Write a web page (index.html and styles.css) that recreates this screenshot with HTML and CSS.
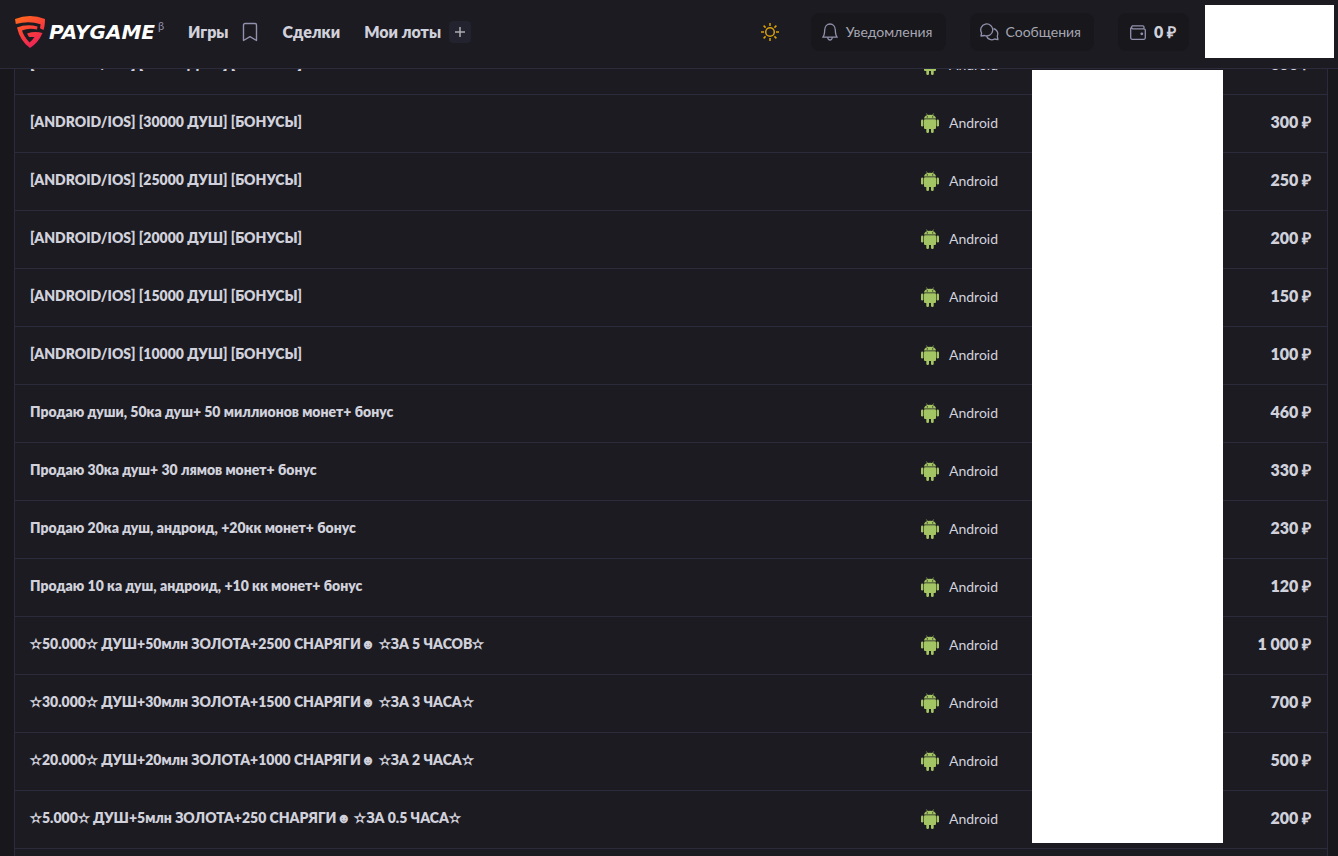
FILE: index.html
```html
<!DOCTYPE html>
<html lang="ru">
<head>
<meta charset="utf-8">
<title>PAYGAME</title>
<link rel="stylesheet" href="styles.css">
<script src="lots.js" defer></script>
</head>
<body>
<svg class="defs" aria-hidden="true">
  <symbol id="android" viewBox="0 0 18 20">
    <g fill="#a4c563">
      <path d="M3 5.600C3.200 3.200 5.300 1.700 9 1.700s5.800 1.500 6 3.900z"/>
      <path d="M5.400 .5l1.200 1.800M12.600 .5l-1.200 1.800" stroke="#a4c563" stroke-width=".7"/>
      <rect x="3" y="6.300" width="12" height="9.700" rx="1"/>
      <rect x="0" y="6.500" width="2.400" height="7" rx="1.200"/>
      <rect x="15.600" y="6.500" width="2.400" height="7" rx="1.200"/>
      <rect x="5.300" y="14" width="2.700" height="6" rx="1.200"/>
      <rect x="10" y="14" width="2.700" height="6" rx="1.200"/>
    </g>
    <circle cx="6.300" cy="3.900" r=".6" fill="#1b1b21"/>
    <circle cx="11.700" cy="3.900" r=".6" fill="#1b1b21"/>
  </symbol>
</svg>
<header class="header">
  <a class="logo" href="#">
    <svg width="30" height="32" viewBox="0 0 30 32" aria-hidden="true">
      <defs><linearGradient id="shield" gradientUnits="userSpaceOnUse" x1="4" y1="0" x2="20" y2="30"><stop offset="0" stop-color="#ff6a1c"/><stop offset=".5" stop-color="#fb4038"/><stop offset="1" stop-color="#ed2357"/></linearGradient></defs>
      <path fill="url(#shield)" d="M0 3Q15-3 30 3C30 7.500 29.500 11 28.500 14L25 12.300 25.600 8.200Q14 4.500 .8 8z"/>
      <path fill="url(#shield)" d="M2 11.500Q12 7.500 22.500 10.500L22 13.500Q14 11.500 7 14.500 8.500 20 14.500 26.500 18 23.500 19.500 21H14L12 17.500Q20 15 27.500 17 23.500 26.500 15 32 5 25 2 11.500z"/>
    </svg>
    <span class="logo-name">PAYGAME</span><sup class="logo-beta">β</sup>
  </a>
  <nav class="nav">
    <a href="#">Игры</a>
    <button class="bookmark" aria-label="Закладки"><svg width="16" height="20" viewBox="0 0 16 20"><path d="M1.500 18.500V3a1.500 1.500 0 0 1 1.500-1.500h10A1.500 1.500 0 0 1 14.500 3v15.500L8 14.700z" fill="none" stroke="#9191ad" stroke-width="1.400" stroke-linejoin="round"/></svg></button>
    <a class="deals" href="#">Сделки</a>
    <a href="#">Мои лоты</a>
    <button class="add" aria-label="Добавить лот"><svg width="10" height="10" viewBox="0 0 10 10"><path d="M5 0v10M0 5h10" stroke="#adadb5" stroke-width="1.500"/></svg></button>
  </nav>
  <div class="tools">
    <button class="theme" aria-label="Тема"><svg width="18" height="18" viewBox="0 0 18 18"><g fill="none" stroke="#d9a00c" stroke-width="1.500"><circle cx="9" cy="9" r="4.300"/><path d="M9 0v3M9 15v3M0 9h3M15 9h3M2.600 2.600l2 2M13.400 13.400l2 2M2.600 15.400l2-2M13.400 4.600l2-2"/></g></svg></button>
    <button class="chip"><svg width="16" height="18" viewBox="0 0 16 18"><path d="M.8 14.200h14.400C13.500 12.500 13.400 10 13.300 7 13.200 3.500 11 1 8 1S2.800 3.500 2.700 7C2.600 10 2.500 12.500 .8 14.200zM5.700 14.500q.3 2.500 2.300 2.500t2.300-2.500" fill="none" stroke="#9191ad" stroke-width="1.300" stroke-linejoin="round"/></svg>Уведомления</button>
    <button class="chip messages"><svg width="19" height="18" viewBox="0 0 19 18"><path d="M1 13l.6-3A6 6 0 1 1 4.500 12.500zM13.500 5.500a5.500 5.500 0 0 1 3.800 7.500l.6 3.600-3.400-.6A5.500 5.500 0 0 1 6.500 13" fill="none" stroke="#9191ad" stroke-width="1.300" stroke-linejoin="round"/></svg>Сообщения</button>
    <button class="chip wallet"><svg width="16" height="15" viewBox="0 0 16 15"><path d="M14 3.200V2a1.200 1.200 0 0 0-1.200-1.200H2.500a1.700 1.700 0 0 0 0 3h11.300a1.500 1.500 0 0 1 1.500 1.500v7.500a1.500 1.500 0 0 1-1.500 1.500H2.300A1.500 1.500 0 0 1 .7 12.800V2.500" fill="none" stroke="#9191ad" stroke-width="1.300"/><circle cx="11.800" cy="8.800" r="1.400" fill="#9191ad"/></svg>0 ₽</button>
    <div class="profile"></div>
  </div>
</header>
<main class="page">
  <div class="list">
    <table class="lots"><tbody id="lots"></tbody></table>
    <div class="sellers"></div>
  </div>
</main>
</body>
</html>
```
FILE: lots.js
```js
const lots = [
  ["[ANDROID/IOS] [50000 ДУШ] [БОНУСЫ]", "350"],
  ["[ANDROID/IOS] [30000 ДУШ] [БОНУСЫ]", "300"],
  ["[ANDROID/IOS] [25000 ДУШ] [БОНУСЫ]", "250"],
  ["[ANDROID/IOS] [20000 ДУШ] [БОНУСЫ]", "200"],
  ["[ANDROID/IOS] [15000 ДУШ] [БОНУСЫ]", "150"],
  ["[ANDROID/IOS] [10000 ДУШ] [БОНУСЫ]", "100"],
  ["Продаю души, 50ка душ+ 50 миллионов монет+ бонус", "460"],
  ["Продаю 30ка душ+ 30 лямов монет+ бонус", "330"],
  ["Продаю 20ка душ, андроид, +20кк монет+ бонус", "230"],
  ["Продаю 10 ка душ, андроид, +10 кк монет+ бонус", "120"],
  ["✫50.000✫ ДУШ+50млн ЗОЛОТА+2500 СНАРЯГИ☻ ✫ЗА 5 ЧАСОВ✫", "1 000"],
  ["✫30.000✫ ДУШ+30млн ЗОЛОТА+1500 СНАРЯГИ☻ ✫ЗА 3 ЧАСА✫", "700"],
  ["✫20.000✫ ДУШ+20млн ЗОЛОТА+1000 СНАРЯГИ☻ ✫ЗА 2 ЧАСА✫", "500"],
  ["✫5.000✫ ДУШ+5млн ЗОЛОТА+250 СНАРЯГИ☻ ✫ЗА 0.5 ЧАСА✫", "200"]
];
document.getElementById("lots").innerHTML = lots.map(([title, price]) => `
  <tr>
    <td class="title"><a href="#">${title}</a></td>
    <td class="platform"><span class="os"><svg width="18" height="20"><use href="#android"/></svg>Android</span></td>
    <td class="seller"></td>
    <td class="price">${price} ₽</td>
  </tr>`).join("");
```
FILE: styles.css
```css
* { box-sizing: border-box; }
body {
  margin: 0;
  height: 100vh;
  display: flex;
  flex-direction: column;
  overflow: hidden;
  background: #17171c;
  color: #d1d1dc;
  font: 14px/20px Lato, "Open Sans", sans-serif;
}
a { color: inherit; text-decoration: none; }
button {
  padding: 0;
  border: 0;
  background: none;
  color: inherit;
  font: inherit;
}
svg { display: block; flex: none; }
.defs { position: absolute; width: 0; height: 0; }

.header {
  position: relative;
  z-index: 1;
  flex: none;
  display: flex;
  align-items: center;
  height: 69px;
  padding: 0 4px 4px 15px;
  background: #1b1b21;
  border-bottom: 1px solid #2b2b3c;
}
.logo { display: flex; align-items: center; width: 173px; }
.logo-name {
  margin-left: 4px;
  color: #fff;
  font: italic bold 20px/24px "DejaVu Sans", sans-serif;
}
.logo-beta {
  align-self: flex-start;
  margin-left: 3px;
  color: #9191ad;
  font-size: 11px;
  line-height: 20px;
}
.nav { display: flex; align-items: center; font-size: 16px; font-weight: 800; }
.bookmark { margin-left: 13px; }
.deals { margin: 0 24px 0 25px; }
.add {
  display: grid;
  place-items: center;
  width: 22px;
  height: 22px;
  margin-left: 8px;
  border-radius: 4px;
  background: #22232e;
}
.tools { display: flex; align-items: center; margin-left: auto; }
.theme { margin-right: 32px; }
.chip {
  display: flex;
  align-items: center;
  gap: 8px;
  height: 38px;
  margin-right: 24px;
  padding: 0 13px 0 11px;
  border-radius: 8px;
  background: #17171c;
  color: #a6a6b2;
}
.messages { gap: 7px; padding: 0 13px 0 10px; }
.wallet {
  margin-right: 16px;
  padding: 0 13px 0 12px;
  color: #d1d1dc;
  font-size: 16px;
  font-weight: 800;
}
.profile { width: 129px; height: 53px; margin-bottom: 2px; background: #fff; }

.page { flex: 1; min-height: 0; padding: 0 10px 0 14px; overflow: hidden; }
.list {
  position: relative;
  min-height: 100%;
  margin-top: -34px;
  padding-bottom: 34px;
  background: #1b1b21;
  border: 1px solid #2b2b3c;
}
.lots { width: 100%; border-collapse: collapse; table-layout: fixed; }
.lots td { height: 58px; padding: 0 16px; border-bottom: 1px solid #2b2b3c; }
.lots .title { padding: 0 15px 2px; font-weight: 800; }
.platform { width: 127px; }
.seller { width: 175px; }
.lots .price { padding-bottom: 2px; font-size: 16px; font-weight: 800; text-align: right; }
.lots tr > :nth-child(4) { width: 120px; }
.os { display: flex; align-items: center; gap: 10px; }
.sellers {
  position: absolute;
  top: 34px;
  right: 104px;
  width: 191px;
  height: 773px;
  background: #fff;
}
```
